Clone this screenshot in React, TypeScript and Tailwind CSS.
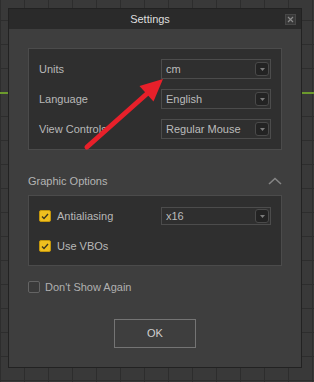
import React from 'react';

const Caret = () => (
  <div className="w-[14px] h-[14px] rounded-[3px] bg-[#232323] border border-[#4a4a4a] flex items-center justify-center">
    <svg width="5" height="3" viewBox="0 0 5 3">
      <path d="M0 0 L5 0 L2.5 3 Z" fill="#7c7c7c" />
    </svg>
  </div>
);

const Select = ({ value, tall = true }) => (
  <div
    className={
      'w-[110px] flex items-center justify-between border border-[#4c4c4c] bg-[#2f2f2f] pl-[4px] pr-[1px] ' +
      (tall ? 'h-[20px]' : 'h-[18px]')
    }
  >
    <span className="text-[#bcbcbc]">{value}</span>
    <Caret />
  </div>
);

const CheckBox = ({ checked }) =>
  checked ? (
    <div className="w-[12px] h-[12px] rounded-[2px] bg-[#f0bf1e] border border-[#c3960c] flex items-center justify-center">
      <svg width="8" height="7" viewBox="0 0 8 7">
        <path d="M1 3.5 L3 5.5 L7 1" fill="none" stroke="#3a3320" strokeWidth="1.3" />
      </svg>
    </div>
  ) : (
    <div className="w-[12px] h-[12px] rounded-[2px] border border-[#646464] bg-[#3a3a3a]" />
  );

const Row = ({ label, value }) => (
  <div className="flex items-center justify-between h-[20px]">
    <span className="text-[#b8b8b8]">{label}</span>
    <Select value={value} />
  </div>
);

export default function App() {
  return (
    <div
      className="relative w-[314px] h-[382px] overflow-hidden pt-[8px] pl-[8px] bg-[#393939] bg-[linear-gradient(to_right,#2d2d2d_1px,transparent_1px),linear-gradient(to_bottom,#2d2d2d_1px,transparent_1px)] bg-[size:24px_24px] bg-[position:0_20px] text-[11px] leading-none"
      style={{ fontFamily: '"Liberation Sans", Arial, sans-serif' }}
    >
      <div className="absolute left-0 right-0 top-[92px] h-[2px] bg-[#6c9a2c]" />

      <div className="relative w-[294px] h-[360px] bg-[#3e3e3e] border border-[#222222] flex flex-col">
        <div className="h-[20px] bg-[#2a2a2a] flex items-center">
          <div className="flex-1 text-center text-[#dedede] pl-[6px]">Settings</div>
          <div className="w-[11px] h-[11px] mr-[5px] bg-[#393939] border border-[#474747] flex items-center justify-center">
            <svg width="7" height="7" viewBox="0 0 7 7">
              <path d="M1 1 L6 6 M6 1 L1 6" stroke="#8a8a8a" strokeWidth="1.2" />
            </svg>
          </div>
        </div>

        <div className="px-[19px] pt-[19px] flex flex-col">
          <div className="border border-[#4b4b4b] bg-[#2f2f2f] p-[10px] flex flex-col gap-[10px]">
            <Row label="Units" value="cm" />
            <Row label="Language" value="English" />
            <Row label="View Controls" value="Regular Mouse" />
          </div>

          <div className="mt-[23px] h-[16px] mb-[6px] flex items-center justify-between">
            <span className="text-[#b4b4b4]">Graphic Options</span>
            <svg width="14" height="8" viewBox="0 0 14 8">
              <path d="M1 7 L7 1.5 L13 7" fill="none" stroke="#858585" strokeWidth="1.6" />
            </svg>
          </div>

          <div className="border border-[#4b4b4b] bg-[#2f2f2f] pt-[11px] pb-[10px] px-[10px] flex flex-col gap-[12px]">
            <div className="flex items-center justify-between h-[18px]">
              <div className="flex items-center gap-[6px]">
                <CheckBox checked />
                <span className="text-[#b8b8b8]">Antialiasing</span>
              </div>
              <Select value="x16" tall={false} />
            </div>
            <div className="flex items-center h-[18px] gap-[6px]">
              <CheckBox checked />
              <span className="text-[#b8b8b8]">Use VBOs</span>
            </div>
          </div>

          <div className="mt-[15px] flex items-center gap-[5px] h-[12px]">
            <CheckBox checked={false} />
            <span className="text-[#b0b0b0]">Don't Show Again</span>
          </div>

          <div className="mt-[26px] flex justify-center">
            <div className="w-[82px] h-[29px] border border-[#747474] bg-[#3e3e3e] flex items-center justify-center text-[#cfcfcf]">
              OK
            </div>
          </div>
        </div>
      </div>

      <svg className="absolute left-0 top-0" width="314" height="382" viewBox="0 0 314 382">
        <line x1="87" y1="147" x2="150" y2="91" stroke="#e8202a" strokeWidth="5" strokeLinecap="round" />
        <polygon points="163,79 139.5,86 153.5,101.5" fill="#e8202a" />
      </svg>
    </div>
  );
}
